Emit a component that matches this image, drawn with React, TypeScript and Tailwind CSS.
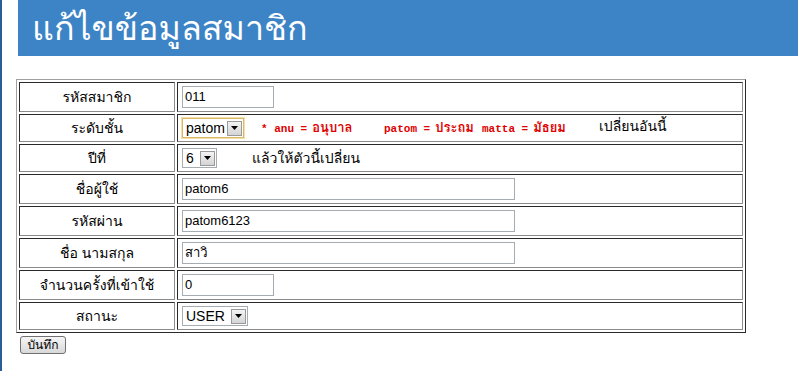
import React from "react";

type Row = { label: string; h: "in" | "sel"; content: React.ReactNode };

function Arrow() {
  return (
    <span className="flex h-[15px] w-[15px] items-center justify-center border border-[#9a9a9a] bg-gradient-to-b from-[#f4f4f4] to-[#d4d4d4]">
      <svg width="7" height="4" viewBox="0 0 7 4">
        <path d="M0 0h7L3.5 4z" fill="#000" />
      </svg>
    </span>
  );
}

function FakeSelect({ value, width, focus }: { value: string; width: string; focus?: boolean }) {
  return (
    <div
      className={`flex h-[20px] items-center justify-between border pl-[3px] pr-[1px] text-[14px] ${width} ${
        focus ? "border-[#d9b66a] ring-1 ring-[#f3dfa8]" : "border-[#a5acb2]"
      }`}
    >
      <span className="leading-none">{value}</span>
      <Arrow />
    </div>
  );
}

function TextBox({ value, wide }: { value: string; wide?: boolean }) {
  return (
    <div
      className={`flex h-[22px] items-center border border-[#a5acb2] pl-[2px] text-[13px] text-black ${
        wide ? "w-[333px]" : "w-[92px]"
      }`}
    >
      {value}
    </div>
  );
}

function RedNote({ code, th, width }: { code: string; th: string; width: string }) {
  return (
    <span className={`inline-flex shrink-0 items-baseline whitespace-nowrap ${width}`}>
      <span className="font-['Liberation_Mono',monospace] text-[11px]">{code} =</span>
      <span className="ml-[5px] text-[13px]">{th}</span>
    </span>
  );
}

const rows: Row[] = [
  { label: "รหัสสมาชิก", h: "in", content: <TextBox value="011" /> },
  {
    label: "ระดับชั้น",
    h: "sel",
    content: (
      <div className="flex items-center">
        <FakeSelect value="patom" width="w-[62px]" focus />
        <div className="ml-[17px] flex items-baseline font-bold text-[#e00000]">
          <RedNote code="* anu" th="อนุบาล" width="w-[123px]" />
          <RedNote code="patom" th="ประถม" width="w-[98px]" />
          <RedNote code="matta" th="มัธยม" width="w-[117px]" />
        </div>
        <span className="-mt-[3px] text-[14px]">เปลี่ยนอันนี้</span>
      </div>
    ),
  },
  {
    label: "ปีที่",
    h: "sel",
    content: (
      <div className="flex items-center">
        <FakeSelect value="6" width="w-[35px]" />
        <span className="ml-[35px] text-[14px]">แล้วให้ตัวนี้เปลี่ยน</span>
      </div>
    ),
  },
  { label: "ชื่อผู้ใช้", h: "in", content: <TextBox value="patom6" wide /> },
  { label: "รหัสผ่าน", h: "in", content: <TextBox value="patom6123" wide /> },
  { label: "ชื่อ นามสกุล", h: "in", content: <TextBox value="สาวิ" wide /> },
  { label: "จำนวนครั้งที่เข้าใช้", h: "in", content: <TextBox value="0" /> },
  { label: "สถานะ", h: "sel", content: <FakeSelect value="USER" width="w-[66px]" /> },
];

export default function App() {
  return (
    <div className="min-h-screen border-l-2 border-[#2b5d97] bg-white font-['Liberation_Sans','Tahoma','Loma','Garuda','Noto_Sans_Thai_Looped','Noto_Sans_Thai',sans-serif] text-black">
      <div className="ml-4 flex h-[56px] items-center bg-[#3d84c6] pl-[14px]">
        <h1 className="text-[34px] leading-none text-white">แก้ไขข้อมูลสมาชิก</h1>
      </div>

      <table className="ml-[14px] mt-[23px] w-[730px] border-separate border-spacing-[2px] border border-t-[#a0a0a0] border-l-[#a0a0a0] border-b-[#2a2a2a] border-r-[#2a2a2a]">
        <tbody>
          {rows.map((r) => (
            <tr key={r.label}>
              <td
                className={`w-[156px] border border-t-[#2a2a2a] border-l-[#2a2a2a] border-b-[#8c8c8c] border-r-[#8c8c8c] p-0 text-center align-middle text-[14px] ${
                  r.h === "in" ? "h-[30px]" : "h-[28px]"
                }`}
              >
                {r.label}
              </td>
              <td className="border border-t-[#2a2a2a] border-l-[#2a2a2a] border-b-[#8c8c8c] border-r-[#8c8c8c] p-0 pl-[4px] align-middle">
                {r.content}
              </td>
            </tr>
          ))}
        </tbody>
      </table>

      <button className="ml-[18px] mt-[3px] flex h-[18px] w-[46px] items-center justify-center rounded-[3px] border border-[#707070] bg-gradient-to-b from-[#f6f6f6] to-[#d8d8d8] text-[12px] leading-none">
        บันทึก
      </button>
    </div>
  );
}
